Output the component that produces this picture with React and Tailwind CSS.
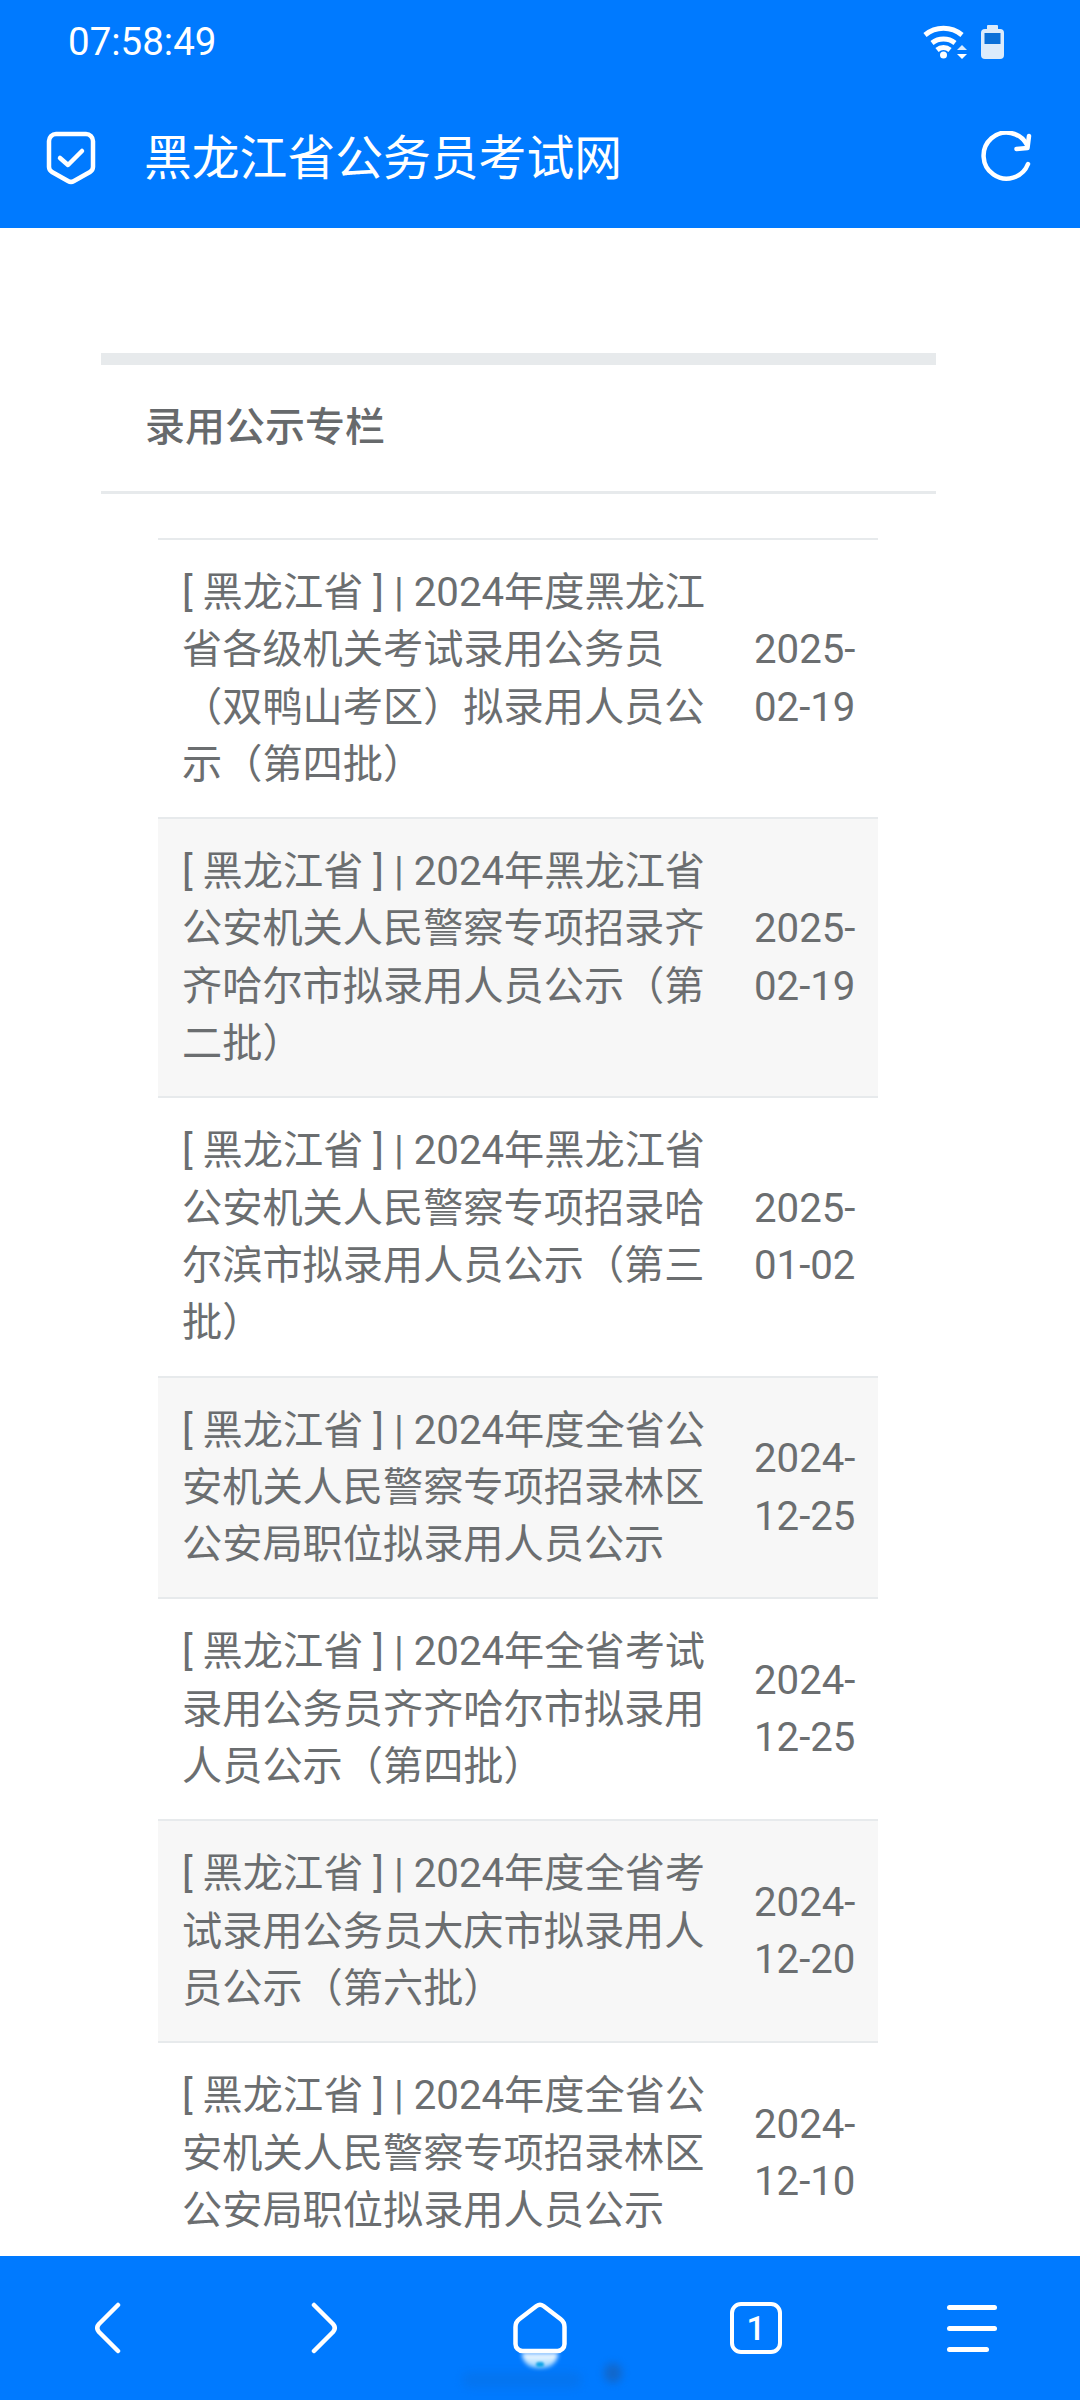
const rows = [
  { title: "[ 黑龙江省 ] | 2024年度黑龙江省各级机关考试录用公务员（双鸭山考区）拟录用人员公示（第四批）", date: "2025-02-19" },
  { title: "[ 黑龙江省 ] | 2024年黑龙江省公安机关人民警察专项招录齐齐哈尔市拟录用人员公示（第二批）", date: "2025-02-19", striped: true },
  { title: "[ 黑龙江省 ] | 2024年黑龙江省公安机关人民警察专项招录哈尔滨市拟录用人员公示（第三批）", date: "2025-01-02" },
  { title: "[ 黑龙江省 ] | 2024年度全省公安机关人民警察专项招录林区公安局职位拟录用人员公示", date: "2024-12-25", striped: true },
  { title: "[ 黑龙江省 ] | 2024年全省考试录用公务员齐齐哈尔市拟录用人员公示（第四批）", date: "2024-12-25" },
  { title: "[ 黑龙江省 ] | 2024年度全省考试录用公务员大庆市拟录用人员公示（第六批）", date: "2024-12-20", striped: true },
  { title: "[ 黑龙江省 ] | 2024年度全省公安机关人民警察专项招录林区公安局职位拟录用人员公示", date: "2024-12-10" },
];

const ShieldIcon = () => (
  <svg className="mb-[2px]" width="50" height="54" viewBox="0 0 50 54" fill="none" stroke="white" strokeWidth="4.5" strokeLinejoin="round" strokeLinecap="round">
    <path d="M10 3h30a7 7 0 0 1 7 7v26a6 6 0 0 1-3 5L28 50a6 6 0 0 1-6 0L6 41a6 6 0 0 1-3-5V10a7 7 0 0 1 7-7z" />
    <path d="M14 27l8 7 14-14" />
  </svg>
);

const RefreshIcon = () => (
  <svg width="52" height="52" viewBox="0 0 52 52" fill="none" stroke="white" strokeWidth="4.500" strokeLinecap="round" strokeLinejoin="round">
    <path d="M47 33A23 23 0 1 1 46 14" />
    <path d="M48 5l-1.500 12-11 1" />
  </svg>
);

const WifiIcon = () => (
  <svg width="46" height="34" viewBox="0 0 46 34" fill="none" stroke="white" strokeWidth="5">
    <path d="M2 10a29 29 0 0 1 37 0" />
    <path d="M9 18a19 19 0 0 1 23 0" />
    <path d="M14 25a10 10 0 0 1 13 0" />
    <circle cx="20.500" cy="30" r="3.500" fill="white" stroke="none" />
    <path d="M34 25l5-5 5 5z" fill="white" stroke="none" opacity="0.85" />
    <path d="M34 29l5 5 5-5z" fill="white" stroke="none" />
  </svg>
);

const BatteryIcon = () => (
  <svg width="23" height="34" viewBox="0 0 23 34">
    <rect x="6" y="0" width="11" height="5" rx="1" fill="#dcebfb" />
    <path d="M4 4h15a4 4 0 0 1 4 4v22a4 4 0 0 1-4 4H4a4 4 0 0 1-4-4V8a4 4 0 0 1 4-4z" fill="#dcebfb" />
    <rect x="3.500" y="8" width="16" height="11" fill="#0a6fd8" />
  </svg>
);

const navStroke = { fill: "none", stroke: "white", strokeWidth: 4.5, strokeLinecap: "round", strokeLinejoin: "round" };

const NavBar = () => (
  <div className="relative grid h-[144px] shrink-0 grid-cols-5 items-start bg-[#007aff] pt-[46px]">
    <div className="flex justify-center">
      <svg width="26" height="52" viewBox="0 0 26 52" {...navStroke}>
        <path d="M23 3L4 22q-3.500 4 0 8l19 19" />
      </svg>
    </div>
    <div className="flex justify-center">
      <svg width="26" height="52" viewBox="0 0 26 52" {...navStroke}>
        <path d="M3 3l19 19q3.500 4 0 8L3 49" />
      </svg>
    </div>
    <div className="flex justify-center">
      <svg width="54" height="52" viewBox="0 0 54 52" {...navStroke}>
        <path d="M23.500 4q3.500-2.500 7 0l17 13q4 3 4 8v17a7 7 0 0 1-7 7H9.500a7 7 0 0 1-7-7V25q0-5 4-8z" />
      </svg>
    </div>
    <div className="flex justify-center">
      <div className="flex h-[52px] w-[52px] items-center justify-center rounded-[11px] border-[4.5px] border-white text-[33px] font-medium leading-none text-white">1</div>
    </div>
    <div className="flex flex-col items-start justify-center gap-[16px] justify-self-center pt-[3px]">
      <div className="h-[5px] w-[50px] rounded-full bg-white" />
      <div className="h-[5px] w-[50px] rounded-full bg-white" />
      <div className="h-[5px] w-[42px] rounded-full bg-white" />
    </div>
    {/* watermark smudge under the home icon */}
    <div className="absolute left-[462px] top-[116px] h-[16px] w-[120px] rounded-full bg-[#0a6fe0] opacity-50 blur-[5px]" />
    <div className="absolute left-[604px] top-[107px] h-[20px] w-[18px] rounded-full bg-[#1a5fb4] opacity-70 blur-[4px]" />
    <div className="absolute left-[522px] top-[97px] h-[15px] w-[36px] rounded-b-full bg-gradient-to-b from-white to-[#8fd0ff] blur-[2px]" />
    <div className="absolute left-[536px] top-[106px] h-[5px] w-[8px] rounded-full bg-[#12a5e8] blur-[1px]" />
  </div>
);

export default function App() {
  return (
    <div className="flex h-[2400px] w-[1080px] flex-col overflow-hidden bg-white font-['Roboto','Noto_Sans_CJK_SC',sans-serif]">
      <header className="h-[228px] shrink-0 bg-[#007aff] text-white">
        <div className="flex h-[84px] items-center justify-between pl-[68px] pr-[76px]">
          <span className="text-[38.500px] leading-none">07:58:49</span>
          <div className="flex items-center gap-[12px]">
            <WifiIcon />
            <BatteryIcon />
          </div>
        </div>
        <div className="flex h-[144px] items-start justify-between pl-[46px] pr-[47px] pt-[47px]">
          <div className="flex items-center gap-[48px]">
            <ShieldIcon />
            <span className="text-[47.800px] leading-[56px]">黑龙江省公务员考试网</span>
          </div>
          <RefreshIcon />
        </div>
      </header>

      <main className="min-h-0 flex-1 overflow-hidden pl-[101px] pt-[125px]">
        <section className="w-[835px] border-t-[12px] border-[#e7eaec]">
          <div className="border-b-[3px] border-[#e7eaec] px-[44px] pb-[39px] pt-[39px]">
            <h5 className="text-[40px] font-medium leading-[48px] text-[#676a6c]">录用公示专栏</h5>
          </div>
          <div className="ml-[57px] mt-[44px] w-[720px] text-[40.200px] leading-[57.300px] text-[#6b6e70]">
            {rows.map((row) => (
              <div key={row.title + row.date} className={`flex items-center border-t-[2px] border-[#e7eaec] ${row.striped ? "bg-[#f7f7f7]" : ""}`}>
                <div className="w-[572px] shrink-0 p-[24px]">{row.title}</div>
                <div className="w-[148px] py-[24px] pl-[24px] pr-[16px]">{row.date}</div>
              </div>
            ))}
          </div>
        </section>
      </main>

      <NavBar />
    </div>
  );
}
